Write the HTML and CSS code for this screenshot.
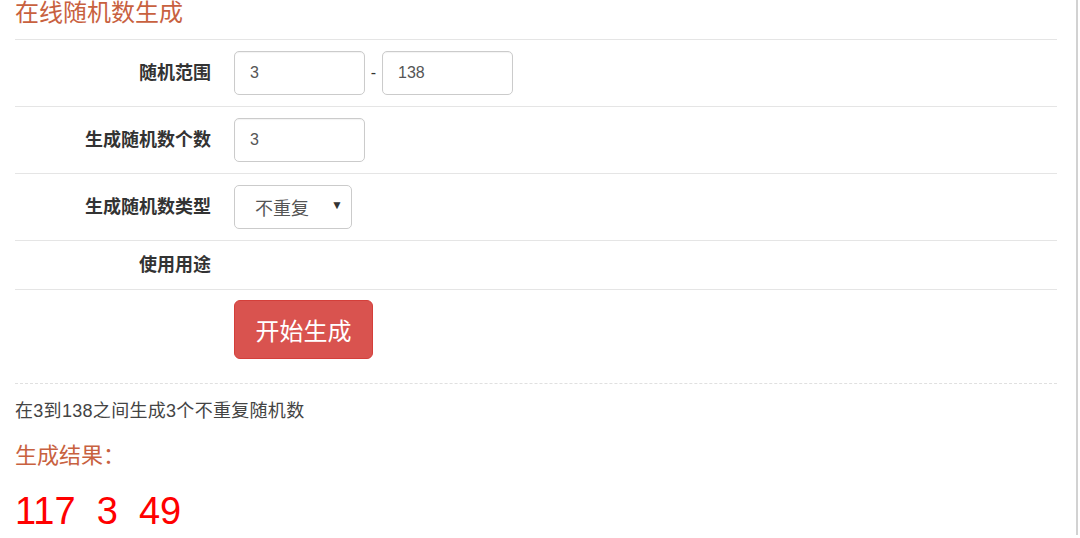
FILE: index.html
```html
<!DOCTYPE html>
<html lang="zh-CN">
<head>
    <meta charset="UTF-8">
    <meta name="viewport" content="width=device-width, initial-scale=1.0">
    <title>在线随机数生成</title>
    <link rel="stylesheet" href="styles.css">
</head>
<body>
    <div class="page">
        <h2 class="title">在线随机数生成</h2>

        <div class="row">
            <label class="label">随机范围</label>
            <div class="field">
                <input class="input" type="text" value="3">
                <span class="dash">-</span>
                <input class="input" type="text" value="138">
            </div>
        </div>

        <div class="row">
            <label class="label">生成随机数个数</label>
            <div class="field">
                <input class="input" type="text" value="3">
            </div>
        </div>

        <div class="row">
            <label class="label">生成随机数类型</label>
            <div class="field">
                <span class="select-wrap">
                    <select class="select">
                        <option>不重复</option>
                        <option>可重复</option>
                    </select>
                </span>
            </div>
        </div>

        <div class="row row-plain">
            <label class="label">使用用途</label>
            <div class="field"></div>
        </div>

        <div class="actions">
            <button class="btn-danger">开始生成</button>
        </div>

        <p class="desc">在3到138之间生成3个不重复随机数</p>
        <h3 class="result-title">生成结果：</h3>
        <div class="result">117&nbsp;&nbsp;3&nbsp;&nbsp;49</div>
    </div>
</body>
</html>
```

FILE: styles.css
```css
html, body {
    margin: 0;
    padding: 0;
    background: #fff;
}
body {
    font-family: "Liberation Sans", "Noto Sans CJK SC", sans-serif;
    color: #333;
    height: 538px;
    overflow: hidden;
}
.page {
    width: 1042px;
    height: 538px;
    padding: 0 19px 0 15px;
    border-right: 2px solid #d2d2d2;
}
.title {
    margin: -3px 0 0;
    padding-bottom: 10px;
    font-size: 24px;
    line-height: 32px;
    font-weight: normal;
    color: #c8613f;
    border-bottom: 1px solid #e5e5e5;
}
.row {
    display: flex;
    align-items: center;
    padding: 11px 0;
    border-bottom: 1px solid #e5e5e5;
}
.row-plain {
    padding: 12px 0;
}
.label {
    width: 196px;
    flex: none;
    text-align: right;
    font-size: 18px;
    line-height: 24px;
    font-weight: bold;
    color: #333;
}
.field {
    display: flex;
    align-items: center;
    margin-left: 23px;
}
.input {
    box-sizing: border-box;
    width: 131px;
    height: 44px;
    padding: 0 15px;
    border: 1px solid #cbcbcb;
    border-radius: 5px;
    font-family: "Liberation Sans", sans-serif;
    font-size: 16px;
    color: #555;
    background: #fff;
    box-shadow: inset 0 1px 1px rgba(0,0,0,0.05);
}
.dash {
    width: 17px;
    text-align: center;
    font-size: 16px;
    color: #333;
}
.select-wrap {
    position: relative;
    display: inline-block;
}
.select-wrap::after {
    content: "\25BC";
    position: absolute;
    right: 9px;
    top: 13px;
    font-size: 12px;
    color: #333;
    pointer-events: none;
}
.select {
    box-sizing: border-box;
    width: 118px;
    height: 44px;
    padding: 0 0 0 20px;
    border: 1px solid #cbcbcb;
    border-radius: 5px;
    background: #fff;
    font-family: "Noto Sans CJK SC", sans-serif;
    font-size: 18px;
    color: #555;
    -webkit-appearance: none;
    appearance: none;
}
.actions {
    padding: 10px 0 0 219px;
}
.btn-danger {
    box-sizing: border-box;
    width: 139px;
    height: 59px;
    border: 1px solid #d43f3a;
    border-radius: 6px;
    background-color: #d9534f;
    color: #fff;
    font-family: "Noto Sans CJK SC", sans-serif;
    font-size: 24px;
    cursor: pointer;
}
.desc {
    margin: 24px 0 0;
    padding-top: 16px;
    border-top: 1px dashed #e0e0e0;
    font-size: 18px;
    line-height: 22px;
    letter-spacing: 0.3px;
    color: #444;
}
.result-title {
    margin: 20px 0 0;
    font-size: 22px;
    line-height: 28px;
    font-weight: normal;
    color: #c8613f;
}
.result {
    margin-top: 20px;
    font-size: 38px;
    line-height: 42px;
    color: #f00;
}
```
